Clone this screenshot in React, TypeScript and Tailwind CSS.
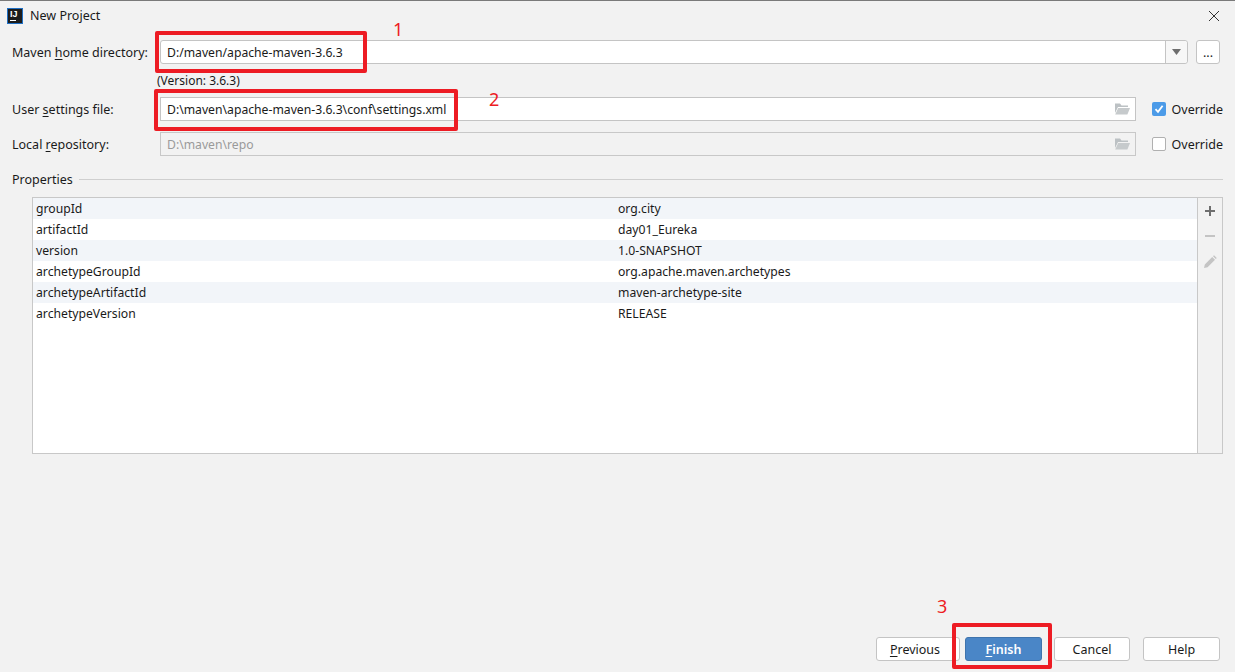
import React from "react";

const font = { fontFamily: '"Noto Sans", "Noto Sans CJK SC", sans-serif' };

function Folder() {
  return (
    <svg width="16" height="14" viewBox="0 0 16 14" className="shrink-0">
      <path d="M1 1.5h5l1.5 2H14v1.5H4L1 11z" fill="#bcc1c4" />
      <path d="M4.2 6H16l-2.6 6.5H1.2z" fill="#c6cacc" />
    </svg>
  );
}

function U({ children }: { children: React.ReactNode }) {
  return <span className="underline underline-offset-2">{children}</span>;
}

function Label({ children }: { children: React.ReactNode }) {
  return <div className="w-[148px] shrink-0 pt-[2px] text-[#1a1a1a] whitespace-nowrap">{children}</div>;
}

function Check({ on }: { on: boolean }) {
  return on ? (
    <div className="w-[14px] h-[14px] rounded-[2px] bg-[#4c9be8] flex items-center justify-center">
      <svg width="12" height="12" viewBox="0 0 12 12">
        <path d="M2.5 6.2 5 8.8 9.6 2.8" fill="none" stroke="#fff" strokeWidth="1.8" />
      </svg>
    </div>
  ) : (
    <div className="w-[14px] h-[14px] rounded-[2px] bg-white border border-[#b0b0b0]" />
  );
}

const rows = [
  ["groupId", "org.city"],
  ["artifactId", "day01_Eureka"],
  ["version", "1.0-SNAPSHOT"],
  ["archetypeGroupId", "org.apache.maven.archetypes"],
  ["archetypeArtifactId", "maven-archetype-site"],
  ["archetypeVersion", "RELEASE"],
];

function Btn({ children, primary, className }: { children: React.ReactNode; primary?: boolean; className: string }) {
  return (
    <button
      className={
        "h-[24px] rounded-[3px] border text-center leading-[20px] pt-[1px] " +
        (primary ? "bg-[#4a86c7] border-[#3f74ad] text-white font-semibold " : "bg-white border-[#c4c4c4] text-[#1a1a1a] ") +
        className
      }
    >
      {children}
    </button>
  );
}

export default function App() {
  return (
    <div style={font} className="relative w-[1235px] h-[672px] overflow-hidden bg-[#f2f2f2] text-[12.5px] text-[#1a1a1a] border-t border-[#7a7a7a]">
      {/* Title bar */}
      <div className="h-[30px] pl-[7px] pr-[15px] flex items-center">
        <div className="w-[16px] h-[16px] bg-[#1c1c1c] border border-[#1f6fc4] flex flex-col items-start pl-[2px] pt-[1px]">
          <span className="font-['Liberation_Sans'] text-[9px] leading-[9px] font-bold text-white">IJ</span>
          <span className="w-[6px] h-[1px] bg-white mt-[1px]" />
        </div>
        <span className="ml-[7px] text-[#1a1a1a]">New Project</span>
        <svg width="12" height="12" viewBox="0 0 12 12" className="ml-auto">
          <path d="M1 1 11 11M11 1 1 11" stroke="#333" strokeWidth="1" fill="none" />
        </svg>
      </div>

      {/* Form */}
      <div className="pl-[12px] pr-[12px] mt-[9px]">
        <div className="flex items-center h-[24px]">
          <Label>Maven <U>h</U>ome directory:</Label>
          <div className="w-[1028px] h-[24px] bg-white border border-[#c4c4c4] rounded-[3px] flex items-center">
            <span className="pl-[6px] pt-[2px] flex-1 text-[12.2px]">D:/maven/apache-maven-3.6.3</span>
            <div className="w-[22px] h-full border-l border-[#c4c4c4] bg-[#f7f7f7] rounded-r-[3px] flex items-center justify-center">
              <svg width="9" height="6" viewBox="0 0 9 6"><path d="M0 0h9L4.5 6z" fill="#6e6e6e" /></svg>
            </div>
          </div>
          <div className="ml-[8px] w-[24px] h-[24px] bg-white border border-[#c4c4c4] rounded-[3px] flex items-center justify-center leading-none pt-[3px]">...</div>
        </div>

        <div className="pl-[145px] mt-[8px] h-[18px] leading-[18px] text-[12px]">(Version: 3.6.3)</div>

        <div className="flex items-center h-[24px] mt-[7px]">
          <Label>User <U>s</U>ettings file:</Label>
          <div className="w-[976px] h-[24px] bg-white border border-[#c4c4c4] flex items-center pr-[5px]">
            <span className="pl-[6px] pt-[2px] flex-1 text-[12.2px]">D:\maven\apache-maven-3.6.3\conf\settings.xml</span>
            <Folder />
          </div>
          <div className="ml-[16px]"><Check on /></div>
          <span className="ml-[6px] pt-[2px]">Override</span>
        </div>

        <div className="flex items-center h-[24px] mt-[11px]">
          <Label>Local <U>r</U>epository:</Label>
          <div className="w-[976px] h-[24px] bg-[#f2f2f2] border border-[#c8c8c8] flex items-center pr-[5px]">
            <span className="pl-[6px] pt-[2px] flex-1 text-[12.2px] text-[#9a9a9a]">D:\maven\repo</span>
            <Folder />
          </div>
          <div className="ml-[16px]"><Check on={false} /></div>
          <span className="ml-[6px] pt-[2px]">Override</span>
        </div>

        <div className="flex items-center h-[20px] mt-[13px]">
          <span className="pt-[3px]">Properties</span>
          <div className="ml-[6px] flex-1 h-px bg-[#cfcfcf]" />
        </div>

        {/* Table */}
        <div className="ml-[20px] mt-[8px] h-[257px] border border-[#c8c8c8] flex">
          <div className="flex-1 bg-white">
            {rows.map((r, i) => (
              <div key={r[0]} className={"h-[21px] flex items-center pl-[3px] pt-[2px] text-[12.2px] " + (i % 2 === 0 ? "bg-[#f2f5f9]" : "bg-white")}>
                <span className="w-[582px]">{r[0]}</span>
                <span>{r[1]}</span>
              </div>
            ))}
          </div>
          <div className="w-[25px] border-l border-[#c8c8c8] bg-[#f2f2f2] flex flex-col items-center pt-[6px] gap-[11px]">
            <svg width="14" height="14" viewBox="0 0 14 14"><path d="M7 2v10M2 7h10" stroke="#6e6e6e" strokeWidth="2" /></svg>
            <svg width="14" height="14" viewBox="0 0 14 14"><path d="M2 7h10" stroke="#c4c4c4" strokeWidth="2" /></svg>
            <svg width="16" height="16" viewBox="0 0 16 16"><path d="M2 14l.8-3.6 7.4-7.4 2.8 2.8-7.4 7.4zM11 2.2l1-1 2.8 2.8-1 1z" fill="#c4c4c4" /></svg>
          </div>
        </div>
      </div>

      {/* Footer */}
      <div className="absolute right-[15px] top-[636px] flex">
        <Btn className="w-[84px] pr-[6px]"><U>P</U>revious</Btn>
        <Btn primary className="w-[77px] ml-[5px]"><U>F</U>inish</Btn>
        <Btn className="w-[76px] ml-[12px]">Cancel</Btn>
        <Btn className="w-[77px] ml-[13px]">Help</Btn>
      </div>

      {/* Annotations */}
      <div className="absolute left-[155px] top-[30px] w-[212px] h-[42px] border-[4px] border-[#ed1c24] rounded-[2px]" />
      <div className="absolute left-[154px] top-[88px] w-[304px] h-[42px] border-[4px] border-[#ed1c24] rounded-[2px]" />
      <div className="absolute left-[952px] top-[622px] w-[100px] h-[46px] border-[4px] border-[#ed1c24] rounded-[2px]" />
      <span className="absolute left-[393px] top-[17px] text-[18px] leading-[22px] text-[#ed1c24]">1</span>
      <span className="absolute left-[489px] top-[87px] text-[18px] leading-[22px] text-[#ed1c24]">2</span>
      <span className="absolute left-[937px] top-[594px] text-[18px] leading-[22px] text-[#ed1c24]">3</span>
    </div>
  );
}
